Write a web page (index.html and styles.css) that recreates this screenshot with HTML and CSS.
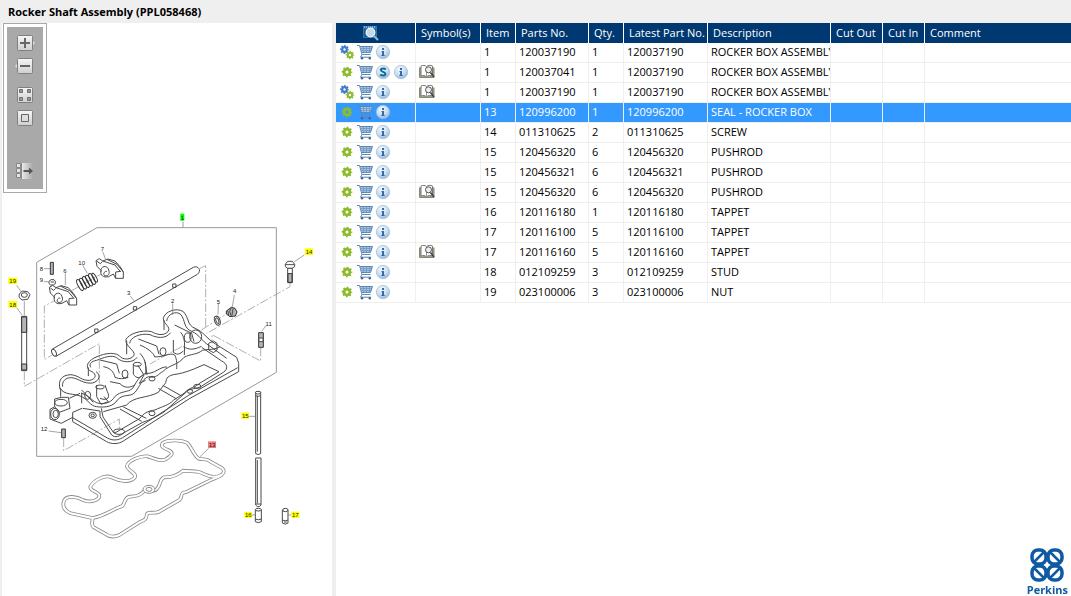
FILE: index.html
```
<!DOCTYPE html>
<html lang="en">

<head>
    <meta charset="UTF-8">
    <meta name="viewport" content="width=device-width, initial-scale=1.0">
    <title>Rocker Shaft Assembly (PPL058468)</title>
    <link rel="stylesheet" href="styles.css">
</head>

<body>
    <!-- Shared icons -->
    <svg class="sprite" aria-hidden="true">
        <defs>
            <radialGradient id="ball" cx="40%" cy="30%" r="75%">
                <stop offset="0" stop-color="#f4f9fd" />
                <stop offset="0.6" stop-color="#c3dcf0" />
                <stop offset="1" stop-color="#8fb4d6" />
            </radialGradient>
            <linearGradient id="tool" x1="0" y1="0" x2="0" y2="1">
                <stop offset="0" stop-color="#f6f6f6" />
                <stop offset="1" stop-color="#cfcfcf" />
            </linearGradient>
            <linearGradient id="fade">
                <stop offset="0" stop-color="#e8e8e8" />
                <stop offset="1" stop-color="#a9a9a9" />
            </linearGradient>
        </defs>
        <symbol id="gear" viewBox="0 0 16 16">
            <circle cx="8" cy="8" r="2.9" fill="none" stroke="#8dbb2c" stroke-width="2.8" />
            <circle cx="8" cy="8" r="4.5" fill="none" stroke="#8dbb2c" stroke-width="1.6" stroke-dasharray="1.9 1.63" stroke-dashoffset="0.95" />
        </symbol>
        <symbol id="gears" viewBox="0 0 16 16">
            <circle cx="5.500" cy="5.500" r="2.300" fill="none" stroke="#3f78cf" stroke-width="2.200" />
            <circle cx="5.500" cy="5.500" r="3.800" fill="none" stroke="#3f78cf" stroke-width="1.400" stroke-dasharray="1.600 1.380" stroke-dashoffset="0.8" />
            <circle cx="11" cy="11" r="2.200" fill="none" stroke="#8dbb2c" stroke-width="2" />
            <circle cx="11" cy="11" r="3.600" fill="none" stroke="#8dbb2c" stroke-width="1.400" stroke-dasharray="1.500 1.320" stroke-dashoffset="0.75" />
        </symbol>
        <symbol id="cart" viewBox="0 0 16 16">
            <path d="M3 2.500H15.500L13.500 8 4.500 8.500z" fill="#a9c4e0" />
            <path d="M4 4.500H15M4.500 6.500H14M6.500 3V8.500M9.500 3V8.500M12.500 3V8" fill="none" stroke="#6f98c6" stroke-width=".8" />
            <path d="M0 1.500H2.500L5 10.500H13.500M3 2.500H15.500L13.500 8.500H4.500M5 10.500L3.500 13.200H14" fill="none" stroke="#5b86b8" />
            <circle cx="5" cy="14.200" r="1.200" fill="#44648c" />
            <circle cx="12.800" cy="14.200" r="1.200" fill="#44648c" />
        </symbol>
        <symbol id="info" viewBox="0 0 16 16">
            <circle cx="8" cy="8" r="6.700" fill="url(#ball)" stroke="#9dbcd9" stroke-width="0.700" />
            <path d="M7 4h2v2H7zM6.500 7H9v4h.7v1H6.300v-1H7V8h-.5z" fill="#3b68a5" />
        </symbol>
        <symbol id="super" viewBox="0 0 16 16">
            <circle cx="8" cy="8" r="6.700" fill="url(#ball)" stroke="#9dbcd9" stroke-width="0.700" />
            <path d="M10.700 5.500C9.500 4.300 5.800 3.900 5.800 6 5.800 8.200 10.400 7.600 10.400 10 10.400 12.100 6.500 11.800 5.200 10.600" fill="none" stroke="#11689c" stroke-width="2" />
        </symbol>
        <symbol id="book" viewBox="0 0 16 16">
            <path d="M.5 3.500V13.500H15V3.500" fill="#a9a68f" stroke="#8b8871" />
            <path d="M2 2c2-1 4-.7 5.500.5 1.500-1.300 4-1.500 6-.5V12c-2-.8-4.500-.6-6 .8-1.500-1.400-3.500-1.600-5.500-.8z" fill="#fff" stroke="#777" />
            <path d="M7.500 2.500V12" stroke="#999" />
            <circle cx="9.500" cy="5.800" r="3" fill="#eee" stroke="#555" />
            <path d="M11.500 8.500L15 13" stroke="#444" stroke-width="1.600" />
        </symbol>
        <symbol id="browse" viewBox="0 0 16 16">
            <path d="M0 1h14v12H0z" fill="#2f76ac" />
            <path d="M1 2h12" stroke="#d8ecf8" stroke-dasharray="1 1" />
            <path d="M1 4h12v8H1z" fill="#1e5b93" />
            <circle cx="7.500" cy="7.500" r="4.300" fill="#c4d8e6" stroke="#f0f6fa" stroke-width="1.300" />
            <path d="M11 11l4 4" stroke="#8fb9d8" stroke-width="2" />
        </symbol>
    </svg>

    <header class="title-bar">
        <h1>Rocker Shaft Assembly (PPL058468)</h1>
    </header>

    <main class="viewer">
        <section class="picture-pane" aria-label="Illustration">
            <div class="toolbar">
                <button aria-label="Zoom in">
                    <svg viewBox="0 0 20 16"><path d="M17 5l3 3-3 3z" fill="#ddd" /><rect x="2.500" y=".5" width="15" height="15" rx="1" fill="url(#tool)" stroke="#808080" /><path d="M5 8h10M10 3v10" stroke="#666" stroke-width="2" /></svg>
                </button>
                <button aria-label="Zoom out">
                    <svg viewBox="0 0 20 16"><path d="M3 5L0 8l3 3z" fill="#ddd" /><rect x="2.500" y=".5" width="15" height="15" rx="1" fill="url(#tool)" stroke="#808080" /><path d="M5 8h10" stroke="#666" stroke-width="2" /></svg>
                </button>
                <button class="group-start" aria-label="Fit to window">
                    <svg viewBox="0 0 20 16"><rect x="2.500" y=".5" width="15" height="15" rx="1" fill="url(#tool)" stroke="#808080" /><path d="M4.500 2.500h3v3h-3zM12.500 2.500h3v3h-3zM4.500 10.500h3v3h-3zM12.500 10.500h3v3h-3z" fill="#999" stroke="#707070" /></svg>
                </button>
                <button aria-label="Actual size">
                    <svg viewBox="0 0 20 16"><rect x="2.500" y=".5" width="15" height="15" rx="1" fill="url(#tool)" stroke="#808080" /><path d="M6.500 4.500h7v7h-7z" fill="#ddd" stroke="#666" /></svg>
                </button>
                <button class="last" aria-label="Hide parts list">
                    <svg viewBox="0 0 20 16"><path d="M7 0h11v16H7z" fill="url(#fade)" /><path d="M1.500.5h4v4h-4zM1.500 5.500h4v4h-4zM1.500 10.500h4v4h-4zM6.500 0v16" fill="#e4e4e4" stroke="#888" /><path d="M8.500 8H16" stroke="#555" stroke-width="2" /><path d="M14 4.500L18 8l-4 3.500z" fill="#555" /></svg>
                </button>
            </div>

            <!-- Exploded view, drawn at three units to the pixel -->
            <svg class="drawing" viewBox="9 579 987 1050" role="img" aria-label="Exploded view of the rocker shaft assembly">
                <g class="thin">
                    <path d="M291 683H829V1117L395 1369H110V787z" />
                    <path d="M549 665V683" />
                </g>

                <!-- centre lines -->
                <g class="centre">
                    <path d="M73 1115V1159L298 1031V1155" />
                    <path d="M175 896L133 918V1078L155 1066" />
                    <path d="M600 805L617 797V980" />
                    <path d="M870 848V860L620 1000M545 1040L450 1092" />
                    <path d="M156 842V880M215 872L310 818M604 990L675 945" />
                    <path d="M191 1315V1352L358 1257V1290" />
                    <path d="M782 1043V1083L636 1004V1030" />
                </g>

                <!-- cylinder head cover -->
                <g class="part" transform="translate(0 975)">
                    <path d="M180 193C174 165 184 151 212 149C238 151 244 168 269 166C289 162 290 148 276 140C255 132 258 112 282 99C305 88 338 78 358 92C367 106 394 105 402 91C407 76 374 64 378 43C386 27 425 13 455 20C470 29 490 34 504 20C514 4 490-2 490-19C492-40 530-54 550-40C568-22 560 0 585 10C610 20 620 40 642 54L710 97L716 115V140L570 220L370 348C355 358 335 358 320 350L218 290V262L246 250" />
                    <path d="M188 185C185 170 196 157 215 158C238 161 249 177 277 174C301 168 302 148 288 140M272 127C266 116 274 109 290 106C310 98 335 88 350 98C365 114 400 115 411 97M389 55C390 38 420 23 450 29C468 38 496 44 512 23M500-12C502-32 528-45 543-31C556-14 551 11 575 19C600 30 606 49 625 60L680 100" />
                    <path d="M181 190C190 210 225 206 240 213C264 221 270 244 290 245C318 249 342 243 352 225C372 204 390 218 405 202C420 184 424 164 445 155C470 162 476 145 488 140C510 118 535 120 552 97C572 86 590 90 607 76C626 72 645 75 660 65" />
                    <path d="M182 190V215M244 205C269 210 277 232 297 235C320 238 336 230 344 215C364 196 382 204 398 190C409 173 416 153 438 145C464 148 480 124 501 126M265 127V153M380 47V88M492-15V15" />
                    <path d="M248 250L300 258V275L335 330C346 340 360 333 370 324L428 292C448 286 474 272 492 261L560 200C572 188 590 193 604 184L670 142C686 132 682 116 665 108L605 67" />
                    <path d="M304 250L309 276L340 322L348 322L420 280C430 265 443 258 465 255C485 245 508 240 520 226L552 205C570 185 585 189 600 174L657 140L612 119C590 128 560 144 520 149C490 156 505 170 490 182L475 202C442 220 400 214 380 240L310 260M360 252L425 289M370 246L439 280M475 190L530 222M488 181L545 213" />
                    <path d="M218 278L322 339C337 347 352 347 368 338L566 211L713 128" />
                    <path d="M330 170L360 176C375 192 391 187 405 180M435 110L441 150M420 85C440 107 438 125 437 148M462 95C487 99 510 81 524 90C532 103 530 123 530 132M550 65C568 75 582 75 604 64M300 220C326 230 330 214 322 200L315 180M290 180V215L303 238L325 230L312 215M413 120L432 150L418 175L437 166M400 117V148C410 161 419 160 428 151M542 22C558 40 553 66 553 90M520 45V82C534 92 540 86 550 78M245 195L280 232M245 203V235" />
                    <path d="M310 125C330 128 342 141 345 157C360 163 370 162 385 157M420 60C445 71 460 84 463 93M300 105L350 117L358 145M415 42L470 63L477 88M524 0L575 25L582 50" />
                    <ellipse cx="263" cy="211" rx="9" ry="12" />
                    <ellipse cx="375" cy="147" rx="9" ry="12" />
                    <ellipse cx="489" cy="80" rx="9" ry="12" />
                    <ellipse cx="563" cy="38" rx="10" ry="14" />
                    <ellipse cx="587" cy="35" rx="18" ry="20" />
                    <ellipse cx="278" cy="271" rx="11" ry="9" />
                    <ellipse cx="278" cy="271" rx="5" ry="4" />
                    <ellipse cx="456" cy="161" rx="9" ry="7" />
                    <ellipse cx="456" cy="265" rx="9" ry="7" />
                    <ellipse cx="570" cy="199" rx="8" ry="6" />
                    <ellipse cx="592" cy="184" rx="11" ry="6" />
                    <ellipse cx="300" cy="186" rx="13" ry="6" />
                    <ellipse cx="412" cy="118" rx="12" ry="6" />
                    <ellipse cx="357" cy="320" rx="17" ry="8" />
                    <path d="M626 55V75L640 83L651 75V55L640 48z" />
                    <path d="M164 222V245L150 253V282L184 295L218 277M164 222L184 217H205L210 250L178 262L164 245M208 220L240 205" />
                    <ellipse cx="183" cy="233" rx="19" ry="10" />
                    <ellipse cx="165" cy="267" rx="13" ry="17" />
                    <ellipse cx="167" cy="267" rx="8" ry="11" />
                </g>

                <!-- rocker shaft -->
                <g class="part">
                    <path class="solid" d="M156 1048L580 802C595 795 606 812 592 823L168 1069z" />
                    <ellipse class="solid" cx="162" cy="1058" rx="6" ry="11" transform="rotate(-25 162 1058)" />
                    <path d="M284 987h10v10h-10zM400 920h10v10h-10zM518 852h10v10h-10z" />
                </g>

                <!-- rocker arms, spring, small screws -->
                <g class="part" transform="translate(0 615)">
                    <g id="arm">
                        <path class="solid" d="M148 247L158 241L168 248L184 242L205 248L221 266L230 281V300L207 300L200 287L186 295C170 299 160 291 163 276L151 264z" />
                        <path d="M163 280C160 262 183 259 186 275C191 286 184 295 174 292C167 286 176 276 181 280M168 248L205 260L222 281M181 243L211 258L230 281M207 300V281L222 279M151 249L161 256L167 250" />
                    </g>
                    <use href="#arm" x="140" y="-80" />
                    <g class="coil">
                        <ellipse cx="240" cy="240" rx="6" ry="18" transform="rotate(-28 240 240)" />
                        <ellipse cx="249" cy="236" rx="6" ry="18" transform="rotate(-28 249 236)" />
                        <ellipse cx="258" cy="231" rx="6" ry="18" transform="rotate(-28 258 231)" />
                        <ellipse cx="267" cy="227" rx="6" ry="18" transform="rotate(-28 267 227)" />
                        <ellipse cx="276" cy="222" rx="6" ry="18" transform="rotate(-28 276 222)" />
                        <ellipse cx="284" cy="218" rx="5" ry="15" transform="rotate(-28 284 218)" />
                    </g>
                    <path class="thread" d="M151 172h9v36h-9z" />
                    <path class="solid" d="M147 229L153 224H162L166 229V236L160 240H152L147 236zM152 231H162" />
                    <path class="solid" d="M58 267L67 258L83 260L90 269L83 283L66 285L57 277z" />
                    <ellipse cx="73" cy="270" rx="9" ry="7" />
                    <path class="solid" d="M65 334h15v163h-15z" />
                    <path class="thread" d="M65 336h15v46h-15zM65 477h15v18h-15z" />
                </g>

                <!-- right hand fasteners -->
                <g class="part" transform="translate(480 615)">
                    <path class="solid" d="M376 178L383 169H397L404 178V185L396 190H383L376 185zM376 179H404" />
                    <path class="solid" d="M383 190h14v43h-14z" />
                    <path class="thread" d="M384 206h12v26h-12z" />
                    <ellipse class="solid" cx="172" cy="347" rx="8" ry="14" transform="rotate(-20 172 347)" />
                    <ellipse cx="172" cy="347" rx="4" ry="9" transform="rotate(-20 172 347)" />
                    <path class="thread" d="M199 318L214 307L225 310L231 321L226 333L210 335L199 327z" />
                    <path d="M214 307L209 319L214 333M203 316L206 330M219 311L216 331" />
                    <path class="thread" d="M296 383h14v44h-14z" />
                    <path class="solid" d="M297 399h12v11h-12z" />
                </g>
                <path class="part thread" d="M185 1287h11v26h-11z" />

                <!-- pushrod and tappets -->
                <g class="part" transform="translate(480 975)">
                    <path class="solid" d="M287 201V386Q294 391 302 386V201z" />
                    <ellipse class="solid" cx="294" cy="203" rx="8" ry="4" />
                    <path d="M292 212V380M287 212Q294 216 302 212" />
                </g>
                <g class="part" transform="translate(150 1290)">
                    <path class="solid" d="M617 84H633V225L628 230H622L617 225z" />
                    <path d="M622 90V220M617 222H633" />
                    <path class="solid" d="M616 240V275Q625 281 634 275V240z" />
                    <ellipse class="solid" cx="625" cy="239" rx="9" ry="4" />
                    <path d="M616 267Q625 272 634 267" />
                    <path class="solid" d="M697 240V279Q706 286 714 279V240z" />
                    <ellipse class="solid" cx="706" cy="240" rx="8" ry="5" />
                    <path d="M697 270Q706 275 714 270M702 276h8" />
                </g>

                <!-- seal: a white line over a wider grey one leaves two edges -->
                <g transform="translate(150 1290)">
                    <g class="seal-edge">
                        <g id="seal">
                            <path d="M41 216C45 196 77 197 101 211C125 220 152 208 147 194C142 184 118 182 121 170C130 154 161 132 185 142C207 153 238 160 254 143C263 128 231 123 231 108C234 92 271 77 292 79C312 83 326 97 347 88C366 76 372 69 357 61C339 55 329 47 340 38C355 29 396 29 413 40C425 52 430 75 446 86C457 90 472 84 481 95L516 114C530 127 516 138 485 149L407 187C387 186 401 205 385 212L325 246C310 252 290 242 290 256C290 266 285 270 270 276L208 315C195 321 180 321 170 314L130 291C120 281 132 270 126 264L62 250C45 243 37 231 41 216z" />
                            <path d="M128 264C165 258 190 236 217 228C227 217 222 202 240 200C260 198 270 197 282 184C295 175 312 190 321 176C334 164 326 151 341 142C361 143 381 137 399 122C421 126 440 119 457 130C475 138 496 147 516 134" />
                        </g>
                    </g>
                    <g class="seal-face">
                        <use href="#seal" />
                    </g>
                    <ellipse class="seal-eye" cx="297" cy="178" rx="18" ry="12" />
                    <ellipse class="seal-eye" cx="297" cy="178" rx="9" ry="6" />
                </g>

                <!-- leaders -->
                <path class="leader" d="M50 856L65 877M73 904V946M50 923L66 945M132 806H150M132 845H146M196 820V855M248 795L262 820M308 755L317 778M391 888L404 905M518 910V945M703 885L697 920M655 910L654 943M798 977L785 994M913 765L883 785M746 1249H766M146 1293L184 1298M626 1345L600 1370M756 1545H766M863 1545H873" />

                <!-- call-outs -->
                <g class="marks">
                    <rect class="green" x="541" y="641" width="12" height="21" />
                    <rect x="25" y="833" width="26" height="19" />
                    <rect x="25" y="903" width="26" height="20" />
                    <rect x="915" y="745" width="24" height="20" />
                    <rect x="724" y="1237" width="23" height="19" />
                    <rect x="733" y="1536" width="23" height="18" />
                    <rect x="874" y="1535" width="24" height="19" />
                    <rect class="red" x="624" y="1324" width="24" height="20" />
                </g>
                <g class="numbers">
                    <text x="547" y="659">1</text>
                    <text x="38" y="849">19</text>
                    <text x="38" y="920">18</text>
                    <text x="927" y="762">14</text>
                    <text x="736" y="1254">15</text>
                    <text x="745" y="1552">16</text>
                    <text x="886" y="1552">17</text>
                    <text x="636" y="1341">13</text>
                    <text x="124" y="812">8</text>
                    <text x="124" y="847">9</text>
                    <text x="195" y="818">6</text>
                    <text x="245" y="795">10</text>
                    <text x="307" y="754">7</text>
                    <text x="386" y="886">3</text>
                    <text x="518" y="910">2</text>
                    <text x="655" y="911">5</text>
                    <text x="704" y="880">4</text>
                    <text x="806" y="977">11</text>
                    <text x="132" y="1294">12</text>
                </g>
            </svg>
        </section>

        <section class="parts-pane" aria-label="Parts list">
            <table class="parts">
                <colgroup>
                    <col class="w-actions">
                    <col class="w-symbols">
                    <col class="w-small">
                    <col class="w-part">
                    <col class="w-small">
                    <col class="w-latest">
                    <col class="w-description">
                    <col class="w-cut-out">
                    <col class="w-cut-in">
                    <col>
                </colgroup>
                <thead>
                    <tr>
                        <th class="browse"><button aria-label="Browse"><svg><use href="#browse" /></svg></button></th>
                        <th>Symbol(s)</th>
                        <th>Item</th>
                        <th>Parts No.</th>
                        <th>Qty.</th>
                        <th>Latest Part No.</th>
                        <th>Description</th>
                        <th>Cut Out</th>
                        <th>Cut In</th>
                        <th>Comment</th>
                    </tr>
                </thead>
                <tbody id="rows"></tbody>
            </table>
        </section>
    </main>

    <div class="logo">
        <svg viewBox="0 0 36 36" aria-hidden="true">
            <g fill="none" stroke="#0f5aa3" stroke-width="3.500">
                <rect x="3" y="3" width="14" height="14" rx="6" />
                <rect x="19" y="3" width="14" height="14" rx="6" />
                <rect x="3" y="19" width="14" height="14" rx="6" />
                <rect x="19" y="19" width="14" height="14" rx="6" />
                <path d="M5 15L15 5M21 5L31 15M5 21L15 31M21 31L31 21" stroke-width="2.500" />
            </g>
        </svg>
        <span>Perkins</span>
    </div>

    <script>
        // icons, symbol, item, part no, qty, latest part no, description
        const parts = [
            ["gears cart info", "", "1", "120037190", "1", "120037190", "ROCKER BOX ASSEMBLY"],
            ["gear cart super info", "book", "1", "120037041", "1", "120037190", "ROCKER BOX ASSEMBLY"],
            ["gears cart info", "book", "1", "120037190", "1", "120037190", "ROCKER BOX ASSEMBLY"],
            ["gear cart info", "", "13", "120996200", "1", "120996200", "SEAL - ROCKER BOX"],
            ["gear cart info", "", "14", "011310625", "2", "011310625", "SCREW"],
            ["gear cart info", "", "15", "120456320", "6", "120456320", "PUSHROD"],
            ["gear cart info", "", "15", "120456321", "6", "120456321", "PUSHROD"],
            ["gear cart info", "book", "15", "120456320", "6", "120456320", "PUSHROD"],
            ["gear cart info", "", "16", "120116180", "1", "120116180", "TAPPET"],
            ["gear cart info", "", "17", "120116100", "5", "120116100", "TAPPET"],
            ["gear cart info", "book", "17", "120116160", "5", "120116160", "TAPPET"],
            ["gear cart info", "", "18", "012109259", "3", "012109259", "STUD"],
            ["gear cart info", "", "19", "023100006", "3", "023100006", "NUT"]
        ];
        const selected = 3;
        const labels = {
            gear: "Part",
            gears: "Assembly",
            cart: "Add to cart",
            super: "Supersession",
            info: "Information",
            book: "Show symbol"
        };

        function icons(names) {
            return names.split(" ").filter(Boolean).map(name =>
                `<button aria-label="${labels[name]}"><svg><use href="#${name}" /></svg></button>`
            ).join("");
        }

        document.getElementById("rows").innerHTML = parts.map((part, i) => {
            const [actions, symbol, ...texts] = part;
            const cells = [...texts, "", "", ""].map(text => `<td>${text}</td>`).join("");
            return `<tr class="${i === selected ? "selected" : ""}">
                <td><div class="icons">${icons(actions)}</div></td>
                <td><div class="icons">${icons(symbol)}</div></td>${cells}</tr>`;
        }).join("");
    </script>
</body>

</html>
```
FILE: styles.css
```
* {
    box-sizing: border-box;
}

body {
    display: flex;
    flex-direction: column;
    min-height: 100vh;
    margin: 0;
    background: #efefef;
    color: #000;
    font-family: "Open Sans", "Noto Sans", sans-serif;
    font-size: 11px;
}

button {
    padding: 0;
    border: none;
    background: none;
    cursor: pointer;
}

svg {
    display: block;
}

.sprite {
    position: absolute;
    width: 0;
    height: 0;
}

.title-bar {
    padding: 4px 8px 3px;
}

h1 {
    margin: 0;
    font-size: 11px;
    line-height: 16px;
}

.viewer {
    display: flex;
    flex: 1;
    gap: 4px;
}

/* Illustration */
.picture-pane {
    flex: 0 0 31%;
    padding-left: 1px;
    border-left: 2px solid #efefef;
    background: #fff;
}

.toolbar {
    display: flex;
    flex-direction: column;
    align-items: center;
    gap: 7px;
    width: 44px;
    padding: 11px 0 13px;
    border: 1px solid #a9a9a9;
    background: #a9a9a9;
    box-shadow: inset 0 0 0 3px #fff;
}

.toolbar svg {
    width: 20px;
    height: 16px;
}

.toolbar .group-start {
    margin-top: 6px;
}

.toolbar .last {
    margin-top: 30px;
}

.drawing {
    width: 100%;
    max-width: 400px;
}

.drawing path,
.drawing ellipse {
    fill: none;
}

.thin {
    stroke: #999;
    stroke-width: 3;
}

.leader {
    stroke: #777;
    stroke-width: 2;
}

.centre {
    stroke: #888;
    stroke-width: 2;
    stroke-dasharray: 26 6 6 6;
}

.part {
    stroke: #4a4a4a;
    stroke-width: 3;
    stroke-linejoin: round;
}

.drawing .solid {
    fill: #fff;
}

.drawing .thread {
    fill: #b5b5b5;
    stroke: #333;
}

.coil {
    stroke: #333;
    stroke-width: 3;
}

.seal-edge {
    stroke: #8c8c8c;
    stroke-width: 11;
}

.seal-face {
    stroke: #fff;
    stroke-width: 6;
}

.drawing .seal-eye {
    fill: #fff;
    stroke: #8c8c8c;
    stroke-width: 3;
}

.marks {
    fill: #ff0;
}

.marks .green {
    fill: #0f0;
}

.marks .red {
    fill: #f08080;
}

.numbers {
    fill: #222;
    font-family: "Liberation Sans", sans-serif;
    font-size: 18px;
    text-anchor: middle;
}

/* Parts list */
.parts-pane {
    flex: 1;
    min-width: 0;
    background: #fff;
}

.parts {
    width: 100%;
    table-layout: fixed;
    border-collapse: separate;
    border-spacing: 0;
}

.w-actions {
    width: 80px;
}

.w-symbols {
    width: 65px;
}

.w-small {
    width: 35px;
}

.w-part {
    width: 73px;
}

.w-latest {
    width: 84px;
}

.w-description {
    width: 123px;
}

.w-cut-out {
    width: 52px;
}

.w-cut-in {
    width: 42px;
}

th,
td {
    height: 20px;
    padding: 0 0 2px 3px;
    border-right: 1px solid #efefef;
    line-height: 16px;
    text-align: left;
    white-space: nowrap;
    overflow: hidden;
}

th {
    padding: 0 0 0 5px;
    border-color: #fff;
    background: #003871;
    color: #fff;
    font-weight: normal;
}

td {
    border-bottom: 1px solid #efefef;
}

th:last-child,
td:last-child {
    border-right: none;
}

.browse {
    padding: 0 10px 0 0;
}

.browse button {
    display: block;
    margin: 0 auto;
}

.browse svg,
.icons svg {
    width: 16px;
    height: 16px;
}

.icons {
    display: flex;
    gap: 2px;
}

.selected td {
    background: #39f;
    color: #fff;
}

/* Brand */
.logo {
    position: fixed;
    right: 3px;
    bottom: 0;
    display: flex;
    flex-direction: column;
    align-items: center;
    color: #0f5aa3;
    font-weight: bold;
    line-height: 13px;
}

.logo svg {
    width: 36px;
    height: 36px;
}
```
